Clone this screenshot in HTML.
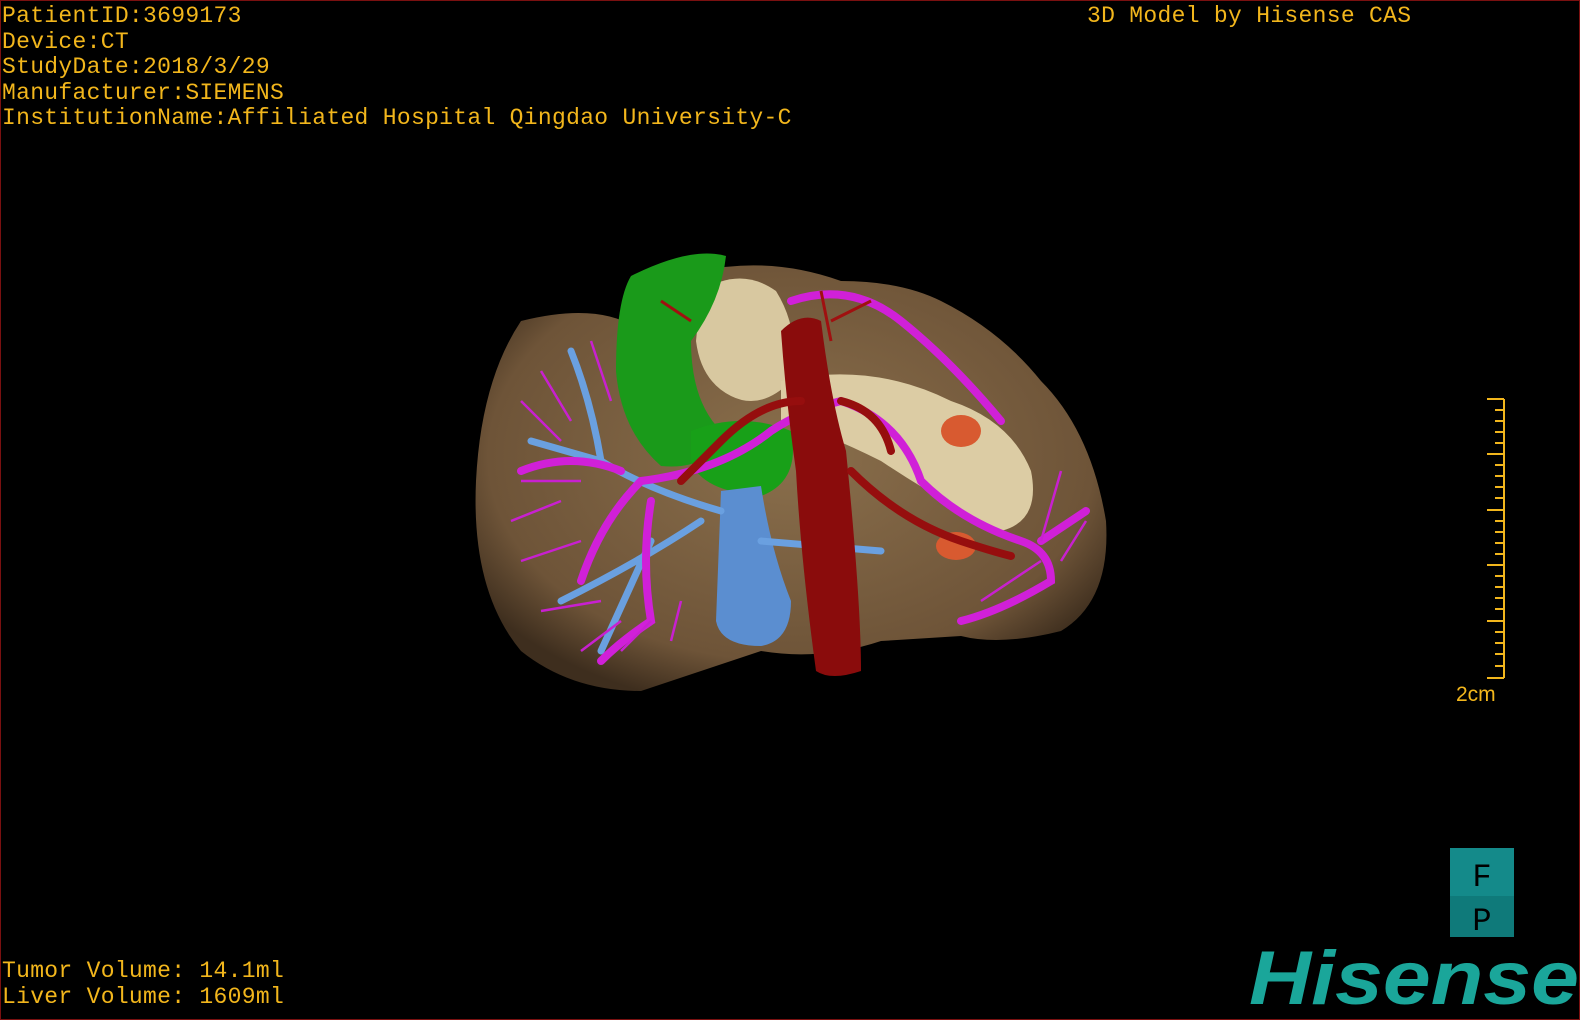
<!DOCTYPE html>
<html><head><meta charset="utf-8"><style>
html,body{margin:0;padding:0;background:#000;}
#c{position:relative;width:1580px;height:1020px;background:#000;overflow:hidden;box-sizing:border-box;border:1px solid #7a1010;}
.t{position:absolute;color:#f2b61c;font-family:"Liberation Mono",monospace;font-size:23px;line-height:25.5px;white-space:pre;letter-spacing:0.3px;}
</style></head><body><div id="c">
<div class="t" style="left:1px;top:3px">PatientID:3699173
Device:CT
StudyDate:2018/3/29
Manufacturer:SIEMENS
InstitutionName:Affiliated Hospital Qingdao University-C</div>
<div class="t" style="left:1086px;top:3px">3D Model by Hisense CAS</div>
<div class="t" style="left:1px;top:958px">Tumor Volume: 14.1ml
Liver Volume: 1609ml</div>
<svg width="1580" height="1020" style="position:absolute;left:0;top:0">
<defs>
<radialGradient id="lv" cx="50%" cy="45%" r="60%"><stop offset="0" stop-color="#8a6f4c"/><stop offset="0.8" stop-color="#6e5438"/><stop offset="1" stop-color="#3e2e1e"/></radialGradient>
</defs>
<path d="M520 320 Q600 300 640 330 L700 270 Q770 255 840 280 Q900 280 940 300 Q1000 330 1040 380 Q1090 430 1105 520 Q1110 600 1060 630 Q1000 645 960 635 L880 640 Q820 660 760 650 Q700 670 640 690 Q570 690 520 650 Q470 590 475 480 Q480 380 520 320Z" fill="url(#lv)"/>
<path d="M700 290 Q740 265 775 290 Q800 330 790 380 Q760 410 730 395 Q700 380 695 340Z" fill="#d8c8a0"/>
<path d="M780 380 Q870 360 950 400 Q1010 420 1030 470 Q1040 520 1000 530 Q940 500 880 460 Q820 430 780 420Z" fill="#dccca4"/>
<path d="M630 275 Q690 245 725 255 Q720 300 690 340 Q690 400 720 430 Q710 470 660 465 Q620 430 615 370 Q615 300 630 275Z" fill="#1a9a1a"/>
<path d="M690 430 Q740 410 790 430 Q800 480 760 495 Q700 490 690 460Z" fill="#18a018"/>
<ellipse cx="960" cy="430" rx="20" ry="16" fill="#d85a30"/>
<ellipse cx="955" cy="545" rx="20" ry="14" fill="#d85a30"/>
<path d="M720 490 L760 485 Q770 550 790 600 Q790 640 760 645 Q720 645 715 620Z" fill="#5b8ed0"/>
<g stroke="#6aa0e0" stroke-width="7" fill="none" stroke-linecap="round">
<path d="M720 510 Q650 490 600 460 L530 440"/><path d="M700 520 Q640 560 560 600"/><path d="M600 460 Q590 400 570 350"/><path d="M650 540 L600 650"/><path d="M760 540 L880 550"/>
</g>
<g stroke="#d020d8" stroke-width="8" fill="none" stroke-linecap="round">
<path d="M640 480 Q720 470 770 430 Q800 410 840 400 Q900 420 920 480 Q960 520 1020 540 Q1050 550 1050 580 Q1000 610 960 620"/>
<path d="M640 480 Q600 520 580 580"/><path d="M620 470 Q570 450 520 470"/><path d="M650 500 Q640 560 650 620 Q620 640 600 660"/>
<path d="M790 300 Q850 280 900 320 Q950 360 1000 420"/><path d="M1040 540 Q1070 520 1085 510"/>
</g>
<g stroke="#c820d0" stroke-width="2.5" fill="none">
<path d="M520 400 L560 440 M540 370 L570 420 M510 520 L560 500 M520 560 L580 540 M540 610 L600 600 M580 650 L620 620 M620 650 L650 620 M670 640 L680 600 M590 340 L610 400 M520 480 L580 480 M980 600 L1040 560 M1060 470 L1040 540 M1085 520 L1060 560"/>
</g>
<path d="M780 330 Q800 310 820 320 Q830 400 845 450 Q860 600 860 670 Q830 680 815 670 Q800 560 795 470 Q785 400 780 330Z" fill="#8a0c0c"/>
<g stroke="#960e0e" stroke-width="8" fill="none" stroke-linecap="round">
<path d="M800 400 Q760 400 720 440 Q700 460 680 480"/><path d="M840 400 Q880 410 890 450"/><path d="M850 470 Q900 520 960 540 Q990 550 1010 555"/>
</g>
<g stroke="#a01010" stroke-width="3" fill="none"><path d="M820 290 L830 340 M660 300 L690 320 M830 320 L870 300"/></g>
<g stroke="#f2b61c" stroke-width="2"><line x1="1503" y1="398" x2="1503" y2="677"/>
<line x1="1486" y1="398" x2="1503" y2="398"/><line x1="1486" y1="453" x2="1503" y2="453"/><line x1="1486" y1="509" x2="1503" y2="509"/><line x1="1486" y1="564" x2="1503" y2="564"/><line x1="1486" y1="620" x2="1503" y2="620"/><line x1="1486" y1="677" x2="1503" y2="677"/>
<path d="M1494 409h9M1494 420h9M1494 431h9M1494 442h9M1494 464h9M1494 475h9M1494 486h9M1494 497h9M1494 520h9M1494 531h9M1494 542h9M1494 553h9M1494 575h9M1494 586h9M1494 597h9M1494 608h9M1494 631h9M1494 642h9M1494 653h9M1494 665h9"/></g>
<text x="1455" y="700" fill="#f2b61c" font-family="Liberation Sans,sans-serif" font-size="21">2cm</text>
<rect x="1449" y="847" width="64" height="48" fill="#148a8a"/>
<rect x="1449" y="895" width="64" height="41" fill="#0f7a7a"/>
<text x="1481" y="885" fill="#000" text-anchor="middle" font-family="Liberation Mono,monospace" font-size="32">F</text>
<text x="1481" y="929" fill="#000" text-anchor="middle" font-family="Liberation Mono,monospace" font-size="32">P</text>
<text x="1248" y="1003" fill="#1aa69a" font-family="Liberation Sans,sans-serif" font-weight="bold" font-style="italic" font-size="76" textLength="330" lengthAdjust="spacingAndGlyphs">Hisense</text>
</svg>
</div></body></html>
